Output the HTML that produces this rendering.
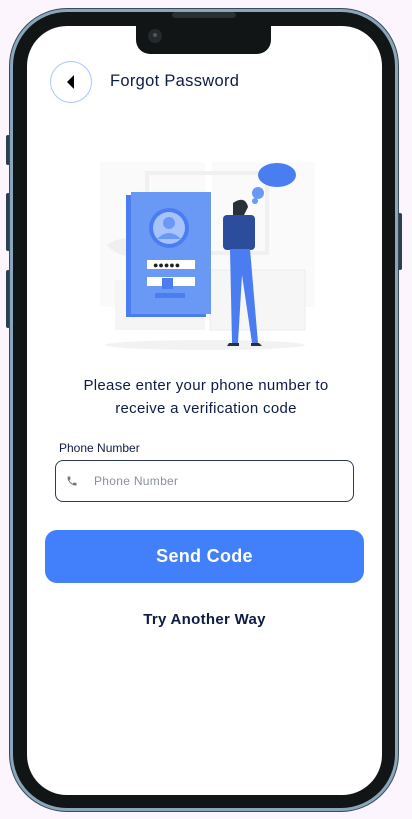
<!DOCTYPE html>
<html><head><meta charset="utf-8"><style>
*{margin:0;padding:0;box-sizing:border-box}
body{width:412px;height:819px;background:#fcf5fd;position:relative;overflow:hidden;font-family:"Liberation Sans",sans-serif}
.btn{position:absolute;background:#2b3f4f;border-radius:2px}
.rim{position:absolute;left:9px;top:8px;width:390px;height:804px;border-radius:58px;background:#8aa6bb;border:1px solid #3a4a58}
.bez{position:absolute;left:13px;top:12px;width:382px;height:796px;border-radius:54px;background:#121516}
.scr{position:absolute;left:27px;top:26px;width:355px;height:769px;border-radius:40px;background:#fff;overflow:hidden}
.notch{position:absolute;left:136px;top:20px;width:135px;height:34px;background:#121516;border-radius:0 0 14px 14px}
.spk{position:absolute;left:172px;top:12px;width:64px;height:6px;background:#2a2f33;border-radius:3px}
.cam{position:absolute;left:148px;top:29px;width:14px;height:14px;border-radius:50%;background:#24292c}
.cam:after{content:"";position:absolute;left:5px;top:4px;width:4px;height:4px;border-radius:50%;background:#555}
.t{position:absolute;color:#0e1b45;white-space:nowrap}
</style></head><body>
<div class="btn" style="left:6px;top:135px;width:4px;height:30px"></div>
<div class="btn" style="left:6px;top:193px;width:4px;height:58px"></div>
<div class="btn" style="left:6px;top:270px;width:4px;height:58px"></div>
<div class="btn" style="left:398px;top:213px;width:4px;height:57px"></div>
<div class="rim"></div><div class="bez"></div>
<div class="scr"></div>
<div class="notch"></div><div class="spk"></div><div class="cam"></div>

<div style="position:absolute;left:50px;top:61px;width:42px;height:42px;border-radius:50%;border:1.5px solid #a9c6ff"></div>
<svg style="position:absolute;left:66px;top:74px" width="10" height="16"><path d="M8 1 L1 8 L8 15Z" fill="#000"/></svg>
<div class="t" style="left:110px;top:72px;font-size:16.5px;letter-spacing:0.3px">Forgot Password</div>

<svg style="position:absolute;left:95px;top:155px" width="220" height="200" viewBox="0 0 220 200">
<rect x="5" y="7" width="105" height="145" rx="3" fill="#fafafa"/>
<rect x="117" y="7" width="105" height="145" rx="3" fill="#fafafa"/>
<rect x="52" y="18" width="120" height="80" fill="none" stroke="#f0f0f0" stroke-width="4"/>
<path d="M12 90 Q25 80 45 85 L45 100 Q25 105 12 90Z" fill="#efefef"/>
<rect x="115" y="115" width="95" height="60" fill="#f6f6f6" stroke="#ececec"/>
<rect x="20" y="125" width="90" height="50" fill="#f5f5f5"/>
<ellipse cx="110" cy="190" rx="100" ry="5" fill="#f2f2f2"/>
<rect x="31" y="40" width="80" height="122" fill="#4a7ef0"/>
<rect x="36" y="37" width="80" height="122" fill="#6a98f5"/>
<circle cx="74" cy="73" r="20" fill="#4a7ef0"/><circle cx="74" cy="73" r="16" fill="#a8c3fb"/>
<circle cx="74" cy="68" r="6" fill="#6a98f5"/><path d="M62 84 Q74 72 86 84Z" fill="#6a98f5"/>
<rect x="52" y="105" width="48" height="9" fill="#fff"/>
<text x="58" y="113" font-size="9" fill="#222">●●●●●</text>
<rect x="52" y="122" width="48" height="9" fill="#fff"/>
<rect x="67" y="123" width="11" height="11" fill="#4a7ef0"/>
<rect x="60" y="138" width="30" height="5" fill="#4a7ef0"/>
<ellipse cx="182" cy="20" rx="19" ry="12" fill="#4a7ef0"/>
<circle cx="163" cy="38" r="6" fill="#6a98f5"/><circle cx="160" cy="46" r="3" fill="#6a98f5"/>
<path d="M138 48 Q150 40 153 52 L148 62 L138 60Z" fill="#263238"/>
<rect x="128" y="60" width="32" height="35" rx="4" fill="#2c4c9c"/>
<path d="M135 94 L155 94 L163 188 L157 188 L147 120 L143 188 L137 188Z" fill="#4a7ef0"/>
<path d="M134 188 h10 v3 h-12z M156 188 h8 l3 3 h-11z" fill="#263238"/>
</svg>

<div class="t" style="left:0;width:412px;text-align:center;top:374px;font-size:15px;line-height:23px;letter-spacing:0.3px">Please enter your phone number to<br>receive a verification code</div>
<div class="t" style="left:59px;top:441px;font-size:12px">Phone Number</div>
<div style="position:absolute;left:55px;top:460px;width:299px;height:42px;border:1.3px solid #2d3a5a;border-radius:8px"></div>
<svg style="position:absolute;left:66px;top:475px" width="12" height="12" viewBox="0 0 24 24"><path d="M6.6 10.8c1.4 2.8 3.8 5.1 6.6 6.6l2.2-2.2c.3-.3.7-.4 1-.2 1.1.4 2.3.6 3.6.6.6 0 1 .4 1 1V20c0 .6-.4 1-1 1C10.6 21 3 13.4 3 4c0-.6.4-1 1-1h3.5c.6 0 1 .4 1 1 0 1.3.2 2.5.6 3.6.1.3 0 .7-.2 1z" fill="#777"/></svg>
<div class="t" style="left:94px;top:474px;font-size:12px;color:#8a8f9a;letter-spacing:0.3px">Phone Number</div>
<div style="position:absolute;left:45px;top:530px;width:319px;height:53px;border-radius:12px;background:#4280fb"></div>
<div class="t" style="left:45px;width:319px;text-align:center;top:546px;font-size:18px;color:#fff;font-weight:bold;letter-spacing:0.3px">Send Code</div>
<div class="t" style="left:0;width:409px;text-align:center;top:611px;font-size:15px;font-weight:bold;letter-spacing:0.3px">Try Another Way</div>
</body></html>
